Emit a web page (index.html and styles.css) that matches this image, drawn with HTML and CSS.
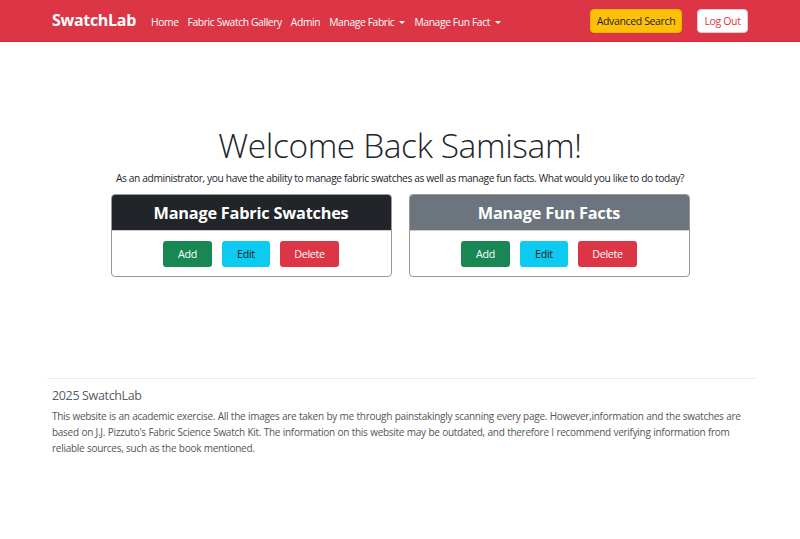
FILE: index.html
```html
<!DOCTYPE html>
<html lang="en">
<head>
<meta charset="utf-8">
<title>SwatchLab</title>
<link rel="stylesheet" href="styles.css">
</head>
<body>
<nav class="navbar">
  <div class="nav-inner">
    <a class="brand" href="#">SwatchLab</a>
    <ul class="nav-links">
      <li><a href="#">Home</a></li>
      <li><a href="#">Fabric Swatch Gallery</a></li>
      <li><a href="#">Admin</a></li>
      <li><a href="#" class="dropdown">Manage Fabric</a></li>
      <li><a href="#" class="dropdown">Manage Fun Fact</a></li>
    </ul>
    <div class="nav-actions">
      <a href="#" class="btn-nav btn-warning">Advanced Search</a>
      <a href="#" class="btn-nav btn-light">Log Out</a>
    </div>
  </div>
</nav>

<main class="main">
  <h1 class="welcome">Welcome Back Samisam!</h1>
  <p class="lead-text">As an administrator, you have the ability to manage fabric swatches as well as manage fun facts. What would you like to do today?</p>
  <div class="cards">
    <div class="card">
      <div class="card-header dark">Manage Fabric Swatches</div>
      <div class="card-body">
        <a href="#" class="btn btn-success">Add</a>
        <a href="#" class="btn btn-info">Edit</a>
        <a href="#" class="btn btn-danger">Delete</a>
      </div>
    </div>
    <div class="card">
      <div class="card-header grey">Manage Fun Facts</div>
      <div class="card-body">
        <a href="#" class="btn btn-success">Add</a>
        <a href="#" class="btn btn-info">Edit</a>
        <a href="#" class="btn btn-danger">Delete</a>
      </div>
    </div>
  </div>
</main>

<footer class="footer">
  <div class="footer-inner">
    <h5 class="footer-title">2025 SwatchLab</h5>
    <p class="footer-text">This website is an academic exercise. All the images are taken by me through painstakingly scanning every page. However,information and the swatches are based on J.J. Pizzuto's Fabric Science Swatch Kit. The information on this website may be outdated, and therefore I recommend verifying information from reliable sources, such as the book mentioned.</p>
  </div>
</footer>
</body>
</html>
```

FILE: styles.css
```css
* { box-sizing: border-box; }
html, body { margin: 0; padding: 0; }
body {
  font-family: "Open Sans", "Noto Sans", sans-serif;
  color: #212529;
  background: #fff;
  width: 800px;
  height: 539px;
  overflow: hidden;
}
a { text-decoration: none; }

.navbar {
  background: #dc3545;
  height: 42px;
  border-bottom: 1px solid #c8283a;
}
.nav-inner {
  display: flex;
  align-items: center;
  height: 41px;
  padding: 0 52px;
}
.brand {
  color: #fff;
  font-weight: 700;
  font-size: 16px;
  letter-spacing: -0.3px;
  margin-right: 15px;
  margin-top: -1px;
}
.nav-links {
  list-style: none;
  display: flex;
  margin: 0 0 1px;
  padding: 0;
  gap: 9px;
}
.nav-links a {
  color: #fff;
  font-size: 10.3px;
  letter-spacing: -0.38px;
}
.dropdown::after {
  content: "";
  display: inline-block;
  margin-left: 5px;
  vertical-align: 2px;
  border-top: 3.5px solid #fff;
  border-left: 3px solid transparent;
  border-right: 3px solid transparent;
}
.nav-actions {
  margin-left: auto;
  display: flex;
  gap: 15px;
}
.btn-nav {
  display: inline-flex;
  align-items: center;
  justify-content: center;
  height: 24px;
  font-size: 10.5px;
  letter-spacing: -0.35px;
  border-radius: 4px;
}
.btn-warning {
  width: 92px;
  background: #ffc107;
  color: #212529;
  border: 1px solid #f0b400;
}
.btn-light {
  width: 51px;
  background: #fff;
  color: #dc3545;
  border: 1px solid #f1c7cc;
}

.main {
  padding-top: 82px;
  text-align: center;
  height: 336px;
}
.welcome {
  font-weight: 300;
  font-size: 33.5px;
  margin: 0;
  line-height: 42px;
  letter-spacing: -0.4px;
}
.lead-text {
  margin: 5px 0 0;
  font-size: 10.2px;
  letter-spacing: -0.36px;
  line-height: 14px;
}
.cards {
  display: flex;
  justify-content: center;
  gap: 17px;
  margin-top: 9px;
}
.card {
  width: 281px;
  border: 1px solid #999;
  border-radius: 4px;
  overflow: hidden;
}
.card-header {
  height: 36px;
  display: flex;
  align-items: center;
  justify-content: center;
  color: #fff;
  font-weight: 700;
  font-size: 16.3px;
  letter-spacing: -0.2px;
  border-bottom: 1px solid #ccc;
}
.card-header.dark { background: #212529; }
.card-header.grey { background: #6c757d; }
.card-body {
  display: flex;
  justify-content: center;
  gap: 10px;
  padding: 10px 0 9px;
}
.btn {
  display: inline-flex;
  align-items: center;
  justify-content: center;
  height: 26px;
  font-size: 10.7px;
  letter-spacing: -0.3px;
  border-radius: 3px;
}
.btn-success { background: #198754; color: #fff; width: 49px; }
.btn-info { background: #0dcaf0; color: #212529; width: 48px; }
.btn-danger { background: #dc3545; color: #fff; width: 59px; }

.footer-inner {
  margin: 0 45px 0 47px;
  border-top: 1px solid #e9ecef;
  padding: 8px 5px 0;
}
.footer-title {
  font-weight: 400;
  font-size: 12.5px;
  letter-spacing: -0.35px;
  color: #555c63;
  margin: 0 0 3px;
  line-height: 18px;
}
.footer-text {
  margin: 0;
  font-size: 10px;
  letter-spacing: -0.28px;
  word-spacing: 0.3px;
  line-height: 16px;
  color: #555;
}
```
